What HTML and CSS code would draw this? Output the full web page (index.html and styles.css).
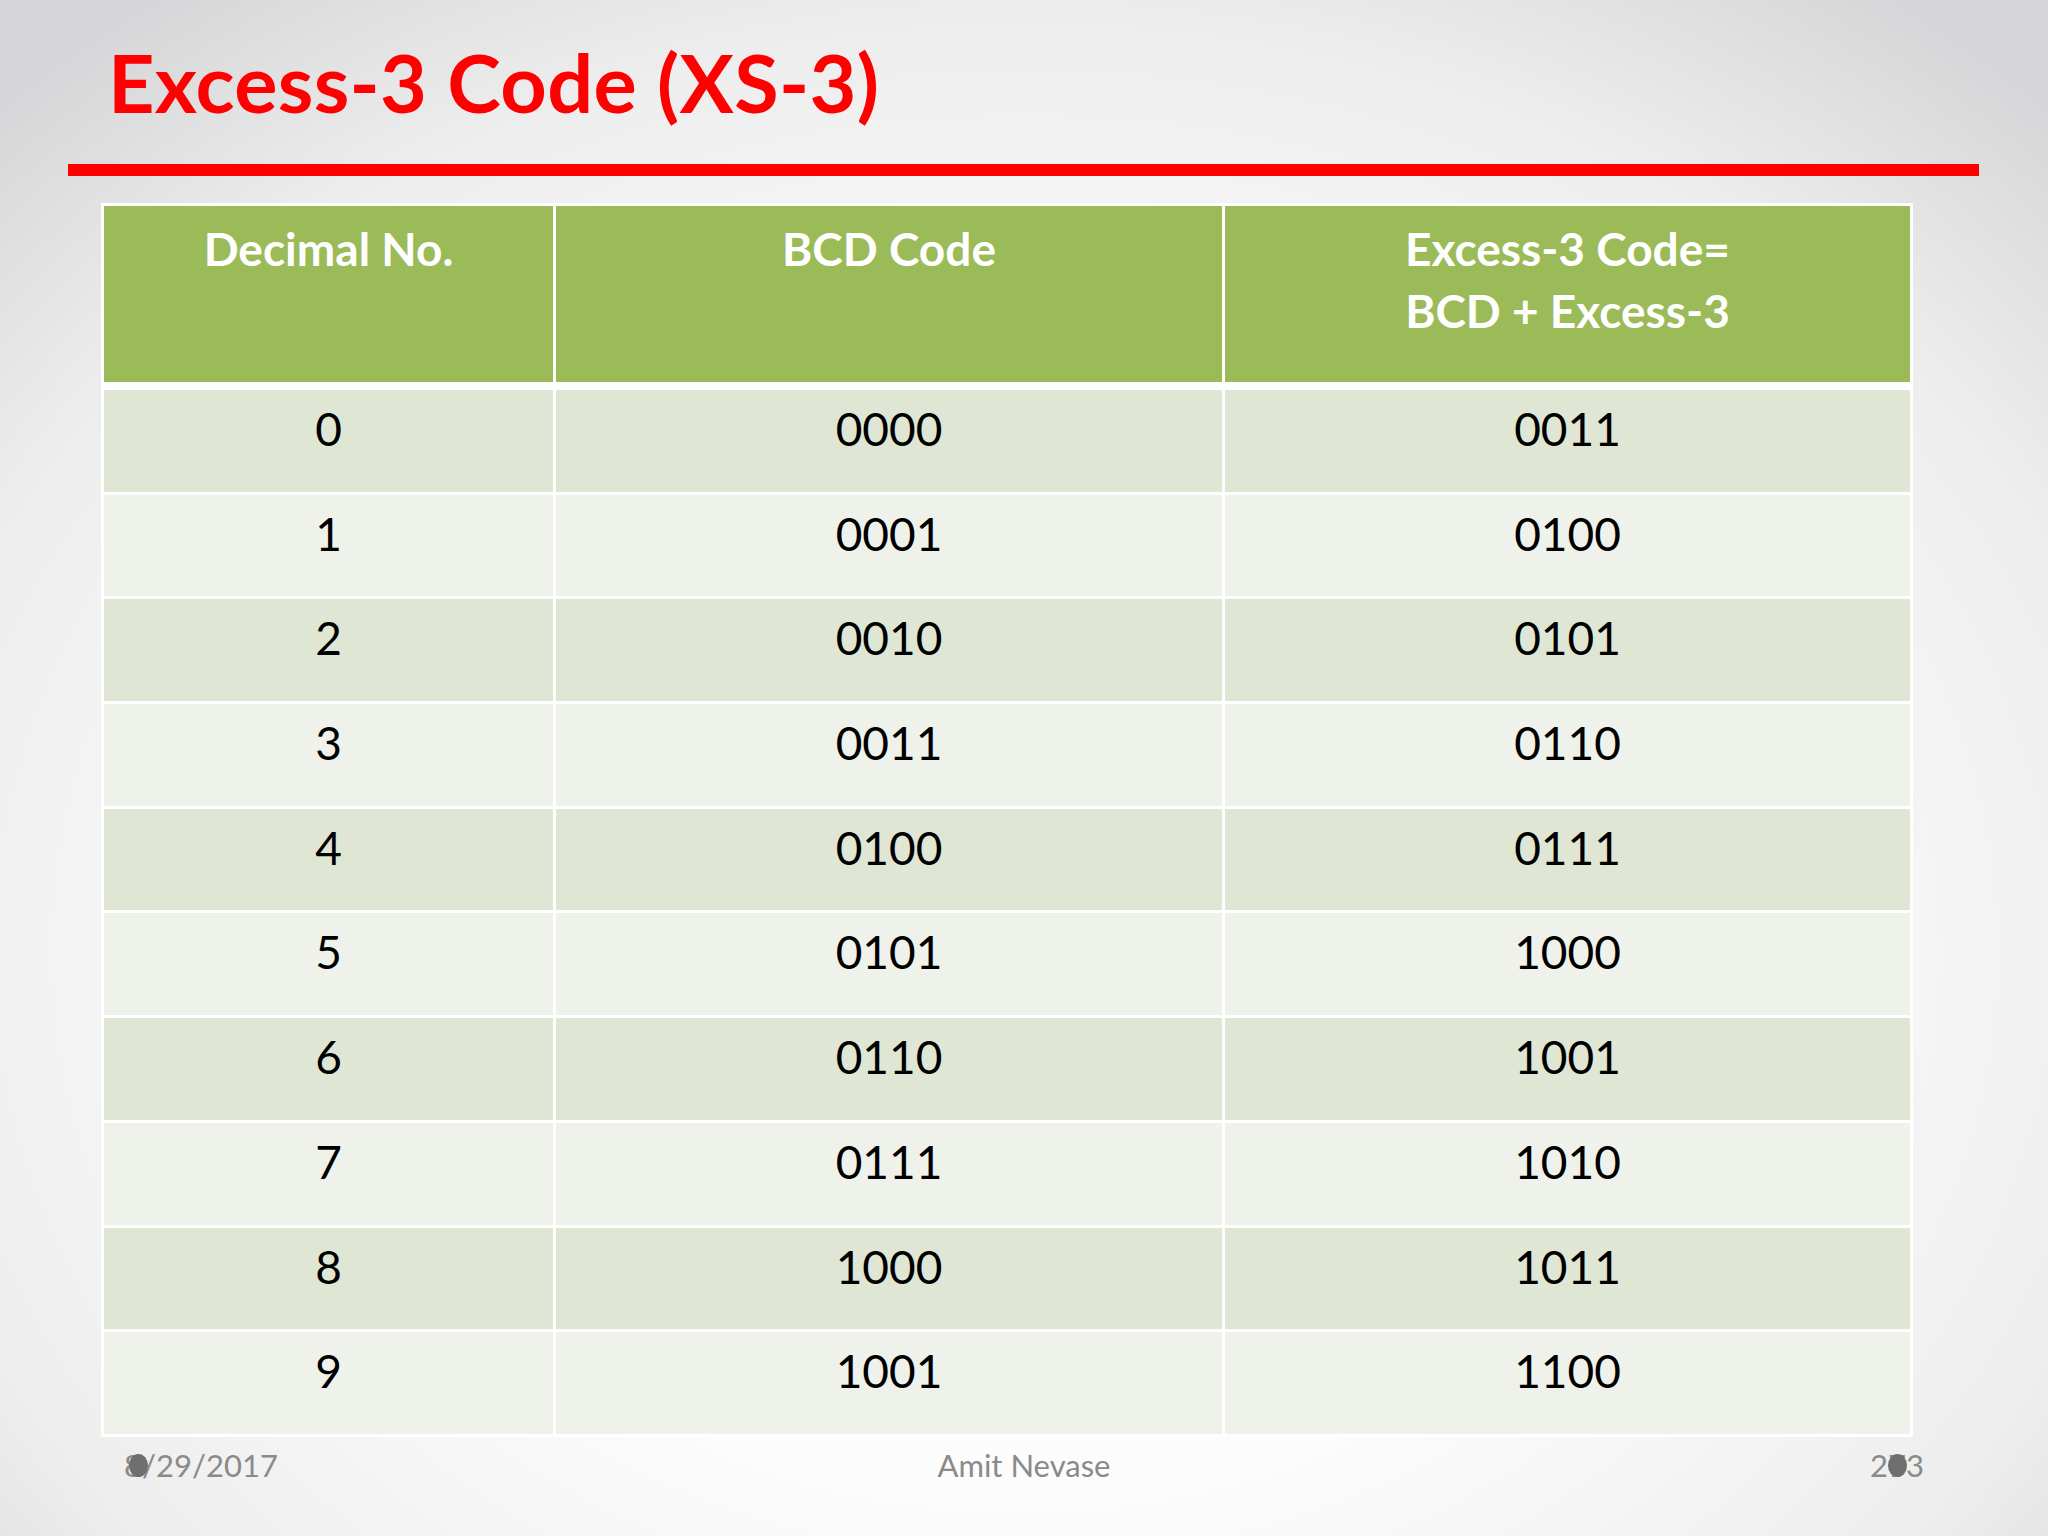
FILE: index.html
```html
<!DOCTYPE html>
<html lang="en">
<head>
<meta charset="utf-8">
<title>Excess-3 Code (XS-3)</title>
<link rel="stylesheet" href="styles.css">
</head>
<body>
<div class="slide">
  <h1 class="title">Excess-3 Code (XS-3)</h1>
  <div class="rule"></div>
  <div class="table">
    <div class="th">Decimal No.</div>
    <div class="th">BCD Code</div>
    <div class="th">Excess-3 Code=<br>BCD + Excess-3</div>

    <div class="td odd">0</div><div class="td odd">0000</div><div class="td odd">0011</div>
    <div class="td even">1</div><div class="td even">0001</div><div class="td even">0100</div>
    <div class="td odd">2</div><div class="td odd">0010</div><div class="td odd">0101</div>
    <div class="td even">3</div><div class="td even">0011</div><div class="td even">0110</div>
    <div class="td odd">4</div><div class="td odd">0100</div><div class="td odd">0111</div>
    <div class="td even">5</div><div class="td even">0101</div><div class="td even">1000</div>
    <div class="td odd">6</div><div class="td odd">0110</div><div class="td odd">1001</div>
    <div class="td even">7</div><div class="td even">0111</div><div class="td even">1010</div>
    <div class="td odd">8</div><div class="td odd">1000</div><div class="td odd">1011</div>
    <div class="td even">9</div><div class="td even">1001</div><div class="td even">1100</div>
  </div>
  <div class="footer">
    <div class="date">8/29/2017<span class="dot dot-date"></span></div>
    <div class="author">Amit Nevase</div>
    <div class="page">273<span class="dot dot-page"></span></div>
  </div>
</div>
</body>
</html>
```
FILE: styles.css
```css
html, body {
  margin: 0;
  padding: 0;
}

body {
  width: 2048px;
  height: 1536px;
  overflow: hidden;
  font-family: "Lato", "Open Sans", sans-serif;
}

.slide {
  box-sizing: border-box;
  width: 2048px;
  height: 1536px;
  display: flex;
  flex-direction: column;
  background: radial-gradient(ellipse 72% 78% at 50% 62%, #ffffff 0%, #fcfcfc 45%, #ededed 78%, #d5d5d7 100%);
}

.title {
  margin: 0;
  padding: 22px 0 0 108px;
  height: 152px;
  box-sizing: border-box;
  font-size: 81px;
  line-height: 120px;
  font-weight: 700;
  color: #fe0000;
  letter-spacing: 0.3px;
  white-space: nowrap;
}

.rule {
  margin: 12px 0 0 68px;
  width: 1911px;
  height: 12px;
  background: #ff0000;
}

.table {
  margin: 27px 0 0 101px;
  width: 1812px;
  box-sizing: border-box;
  padding: 3px;
  display: grid;
  grid-template-columns: 449px 666px 685px;
  grid-template-rows: 181px repeat(10, 101.7px);
  gap: 3px;
  background: #ffffff;
}

.th {
  background: #9bbb59;
  color: #ffffff;
  font-weight: 700;
  font-size: 46px;
  line-height: 62px;
  text-align: center;
  padding-top: 12px;
  margin-bottom: 5px;
}

.td {
  color: #000000;
  font-size: 46px;
  line-height: 62px;
  text-align: center;
  padding-top: 8px;
}

.odd {
  background: #dfe6d4;
}

.even {
  background: #eff2ea;
}

.footer {
  display: grid;
  grid-template-columns: 1fr auto 1fr;
  align-items: baseline;
  margin: 8px 0 0 0;
  padding: 0 124px 0 124px;
  color: #8a8a8a;
  font-size: 31px;
  line-height: 40px;
}

.date {
  position: relative;
  justify-self: start;
}

.author {
  justify-self: center;
}

.page {
  position: relative;
  justify-self: end;
}

.dot {
  position: absolute;
  width: 19px;
  height: 23px;
  border-radius: 50%;
  background: #6f6f6f;
  top: 9px;
}

.dot-date {
  left: 5px;
}

.dot-page {
  left: 18px;
}
```
